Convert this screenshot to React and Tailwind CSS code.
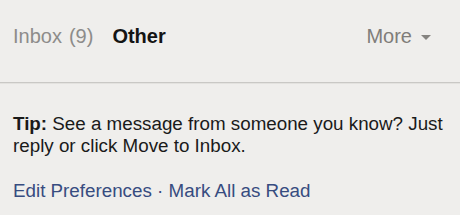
import React from "react";

const App = () => {
    return (
        <div className="w-[460px] h-[215px] bg-[#efeeec] overflow-hidden" style={{ fontFamily: '"Liberation Sans", Arial, sans-serif' }}>
            <div className="h-[82px] flex items-start justify-between pl-[13px] pr-[29px] pt-[25px] text-[20px] leading-[23px]">
                <div className="flex items-center">
                    <span className="text-[#8d8c8a]">Inbox</span>
                    <span className="ml-[7px] text-[#8d8c8a]">(9)</span>
                    <span className="ml-[19px] font-bold text-[#141414]">Other</span>
                </div>
                <div className="flex items-center text-[#7f7d7a]">
                    <span>More</span>
                    <svg className="ml-[9px] mt-[2px]" width="10" height="5" viewBox="0 0 10 5">
                        <path d="M0 0 L10 0 L5 5 Z" fill="#858380"/>
                    </svg>
                </div>
            </div>
            <div className="h-px bg-[#c9c8c5]"></div>
            <div className="h-px bg-[#e3e2df]"></div>
            <div className="pl-[13px] pr-[8px] pt-[29px] text-[18.8px] leading-[22px]">
                <p className="text-[#1a1a1a]">
                    <b>Tip:</b> See a message from someone you know? Just reply or click Move to Inbox.
                </p>
                <div className="mt-[23px] text-[#374c80]">
                    <a className="cursor-pointer">Edit Preferences</a>
                    <span> · </span>
                    <a className="cursor-pointer">Mark All as Read</a>
                </div>
            </div>
        </div>
    );
}

export default App;
